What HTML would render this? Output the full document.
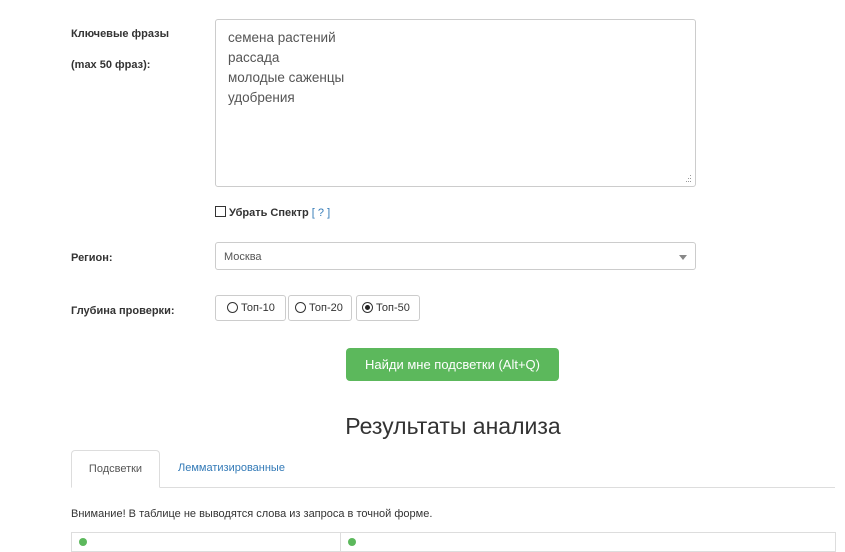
<!DOCTYPE html>
<html><head><meta charset="utf-8"><style>
body{margin:0;width:845px;height:542px;overflow:hidden;background:#fff;font-family:"Liberation Sans",sans-serif;position:relative}
.a{position:absolute}
.lbl{font-size:11px;font-weight:bold;color:#333}
.box{border:1px solid #ccc;border-radius:3px;box-sizing:border-box}
</style></head><body>
<div class="a lbl" style="left:71px;top:28px">Ключевые фразы</div>
<div class="a lbl" style="left:71px;top:59px">(max 50 фраз):</div>
<div class="a box" style="left:215px;top:19px;width:481px;height:168px;padding:8px 12px;font-size:13.5px;line-height:20px;color:#555">семена растений<br>рассада<br>молодые саженцы<br>удобрения
<svg class="a" style="right:3px;bottom:3px" width="8" height="8"><g fill="#999"><rect x="6" y="0" width="1" height="1"/><rect x="4" y="3" width="1" height="1"/><rect x="6" y="3" width="1" height="1"/><rect x="2" y="6" width="1" height="1"/><rect x="4" y="6" width="1" height="1"/><rect x="6" y="6" width="1" height="1"/></g></svg></div>
<div class="a" style="left:215px;top:206px;width:11px;height:11px;border:1px solid #333;box-sizing:border-box"></div>
<div class="a" style="left:229px;top:207px;font-size:11px;font-weight:bold;color:#333">Убрать Спектр <span style="font-weight:normal;color:#337ab7">[ ? ]</span></div>
<div class="a lbl" style="left:71px;top:252px">Регион:</div>
<div class="a box" style="left:215px;top:242px;width:481px;height:28px;font-size:11px;color:#555;padding:8px 8px">Москва
<div class="a" style="right:8px;top:12px;border-left:4px solid transparent;border-right:4px solid transparent;border-top:5px solid #888"></div></div>
<div class="a lbl" style="left:71px;top:305px">Глубина проверки:</div>
<div class="a box" style="left:215px;top:295px;width:71px;height:26px;font-size:11px;color:#333;padding:6px 0 0 11px"><span style="display:inline-block;width:9px;height:9px;border:1px solid #333;border-radius:50%;vertical-align:-2px"></span> Топ-10</div>
<div class="a box" style="left:288px;top:295px;width:64px;height:26px;font-size:11px;color:#333;padding:6px 0 0 6px"><span style="display:inline-block;width:9px;height:9px;border:1px solid #333;border-radius:50%;vertical-align:-2px"></span> Топ-20</div>
<div class="a box" style="left:356px;top:295px;width:64px;height:26px;font-size:11px;color:#333;padding:6px 0 0 5px"><span style="display:inline-block;width:9px;height:9px;border:1px solid #333;border-radius:50%;vertical-align:-2px;position:relative"><span style="position:absolute;left:2px;top:2px;width:5px;height:5px;border-radius:50%;background:#222"></span></span> Топ-50</div>
<div class="a" style="left:346px;top:348px;width:213px;height:33px;background:#5cb85c;border-radius:4px;color:#fff;font-size:13px;text-align:center;line-height:33px">Найди мне подсветки (Alt+Q)</div>
<div class="a" style="left:0;width:906px;top:413px;text-align:center;font-size:23px;color:#333">Результаты анализа</div>
<div class="a" style="left:71px;top:487px;width:764px;border-top:1px solid #ddd"></div>
<div class="a" style="left:71px;top:450px;width:89px;height:38px;border:1px solid #ddd;border-bottom:1px solid #fff;border-radius:4px 4px 0 0;box-sizing:border-box;background:#fff;font-size:11px;color:#555;text-align:center;line-height:36px">Подсветки</div>
<div class="a" style="left:178px;top:462px;font-size:11px;color:#337ab7">Лемматизированные</div>
<div class="a" style="left:71px;top:508px;font-size:11px;color:#333">Внимание! В таблице не выводятся слова из запроса в точной форме.</div>
<div class="a" style="left:71px;top:532px;width:765px;height:20px;border:1px solid #ddd;box-sizing:border-box"></div>
<div class="a" style="left:340px;top:532px;height:20px;border-left:1px solid #ddd"></div>
<div class="a" style="left:79px;top:538px;width:8px;height:8px;border-radius:50%;background:#5cb85c"></div>
<div class="a" style="left:348px;top:538px;width:8px;height:8px;border-radius:50%;background:#5cb85c"></div>
</body></html>
